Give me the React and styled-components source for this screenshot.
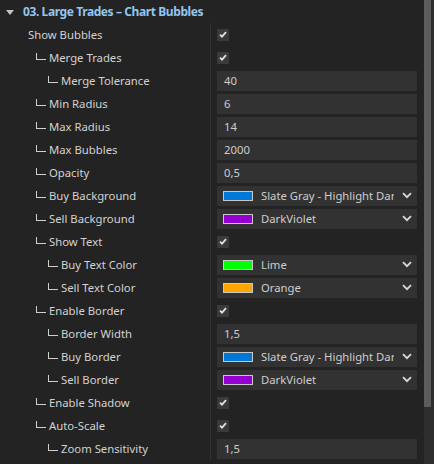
import React from "react";
import styled, { createGlobalStyle } from "styled-components";

const GlobalStyle = createGlobalStyle`
  html, body {
    margin: 0;
    padding: 0;
    background: #232323;
  }
  body {
    font-family: "Noto Sans", "Open Sans", sans-serif;
  }
`;

const Root = styled.div`
  display: flex;
  width: 434px;
  height: 464px;
  overflow: hidden;
  background: #232323;
`;

const Panel = styled.div`
  flex: 1;
  display: flex;
  flex-direction: column;
`;

const Header = styled.div`
  display: flex;
  align-items: center;
  height: 23px;
  padding-left: 6px;
  gap: 9px;
`;

const Caret = styled.span`
  width: 0;
  height: 0;
  border-left: 4px solid transparent;
  border-right: 4px solid transparent;
  border-top: 5px solid #c4c4c4;
  margin-top: 1px;
`;

const Title = styled.div`
  font-size: 12px;
  font-weight: 700;
  color: #93c6ee;
  letter-spacing: -0.4px;
`;

const Rows = styled.div`
  display: flex;
  flex-direction: column;
  position: relative;
`;

const Divider = styled.div`
  position: absolute;
  left: 210px;
  top: 0;
  bottom: 0;
  width: 1px;
  background: #333333;
`;

const Row = styled.div`
  display: flex;
  align-items: center;
  height: 23px;
`;

const Label = styled.div`
  display: flex;
  align-items: center;
  width: 217px;
  flex-shrink: 0;
  padding-left: ${p => (p.$level > 0 ? 24 + p.$level * 12 : 28)}px;
  box-sizing: border-box;
  font-size: 11.3px;
  color: #d2d2d2;
  white-space: nowrap;
`;

const Branch = styled.span`
  display: inline-block;
  width: 9px;
  height: 6px;
  border-left: 1px solid #cfcfcf;
  border-bottom: 1px solid #cfcfcf;
  margin-right: 3px;
  margin-top: -3px;
`;

const Check = styled.div`
  width: 12px;
  height: 12px;
  background: #3a3a3a;
  display: flex;
  align-items: center;
  justify-content: center;
`;

const Input = styled.div`
  width: 200px;
  height: 20px;
  background: #323232;
  box-sizing: border-box;
  padding-left: 7px;
  display: flex;
  align-items: center;
  font-size: 11.3px;
  color: #cdcdcd;
`;

const Select = styled(Input)`
  padding-left: 6px;
  padding-right: 5px;
  gap: 8px;
`;

const Swatch = styled.span`
  width: 30px;
  height: 10px;
  box-sizing: border-box;
  border: 1px solid #c8c8c8;
  background: ${p => p.$color};
  flex-shrink: 0;
`;

const SelectText = styled.span`
  flex: 1;
  overflow: hidden;
  white-space: nowrap;
`;

const Scrollbar = styled.div`
  width: 10px;
  flex-shrink: 0;
  background: #2e2e2e;
  display: flex;
`;

const Thumb = styled.div`
  width: 7px;
  height: 407px;
  background: #5c5c5c;
`;

const CheckMark = () => (
  <svg width="8" height="7" viewBox="0 0 8 7">
    <path d="M1 3.6 L3 5.6 L7 1.2" fill="none" stroke="#e0e0e0" strokeWidth="1.8" />
  </svg>
);

const Chevron = () => (
  <svg width="10" height="7" viewBox="0 0 10 7">
    <path d="M1 1.2 L5 5.2 L9 1.2" fill="none" stroke="#d8d8d8" strokeWidth="1.8" />
  </svg>
);

const rows = [
  { label: "Show Bubbles", level: 0, type: "check" },
  { label: "Merge Trades", level: 1, type: "check" },
  { label: "Merge Tolerance", level: 2, type: "input", value: "40" },
  { label: "Min Radius", level: 1, type: "input", value: "6" },
  { label: "Max Radius", level: 1, type: "input", value: "14" },
  { label: "Max Bubbles", level: 1, type: "input", value: "2000" },
  { label: "Opacity", level: 1, type: "input", value: "0,5" },
  { label: "Buy Background", level: 1, type: "select", value: "Slate Gray - Highlight Dark", color: "#0078d7" },
  { label: "Sell Background", level: 1, type: "select", value: "DarkViolet", color: "#9400d3" },
  { label: "Show Text", level: 1, type: "check" },
  { label: "Buy Text Color", level: 2, type: "select", value: "Lime", color: "#00ff00" },
  { label: "Sell Text Color", level: 2, type: "select", value: "Orange", color: "#ffa500" },
  { label: "Enable Border", level: 1, type: "check" },
  { label: "Border Width", level: 2, type: "input", value: "1,5" },
  { label: "Buy Border", level: 2, type: "select", value: "Slate Gray - Highlight Dark", color: "#0078d7" },
  { label: "Sell Border", level: 2, type: "select", value: "DarkViolet", color: "#9400d3" },
  { label: "Enable Shadow", level: 1, type: "check" },
  { label: "Auto-Scale", level: 1, type: "check" },
  { label: "Zoom Sensitivity", level: 2, type: "input", value: "1,5" },
];

const Value = ({ row }) => {
  if (row.type === "check") {
    return (
      <Check>
        <CheckMark />
      </Check>
    );
  }
  if (row.type === "select") {
    return (
      <Select>
        <Swatch $color={row.color} />
        <SelectText>{row.value}</SelectText>
        <Chevron />
      </Select>
    );
  }
  return <Input>{row.value}</Input>;
};

export default function App() {
  return (
    <Root>
      <GlobalStyle />
      <Panel>
        <Header>
          <Caret />
          <Title>03. Large Trades – Chart Bubbles</Title>
        </Header>
        <Rows>
          <Divider />
          {rows.map(row => (
            <Row key={row.label}>
              <Label $level={row.level}>
                {row.level > 0 && <Branch />}
                {row.label}
              </Label>
              <Value row={row} />
            </Row>
          ))}
        </Rows>
      </Panel>
      <Scrollbar>
        <Thumb />
      </Scrollbar>
    </Root>
  );
}
